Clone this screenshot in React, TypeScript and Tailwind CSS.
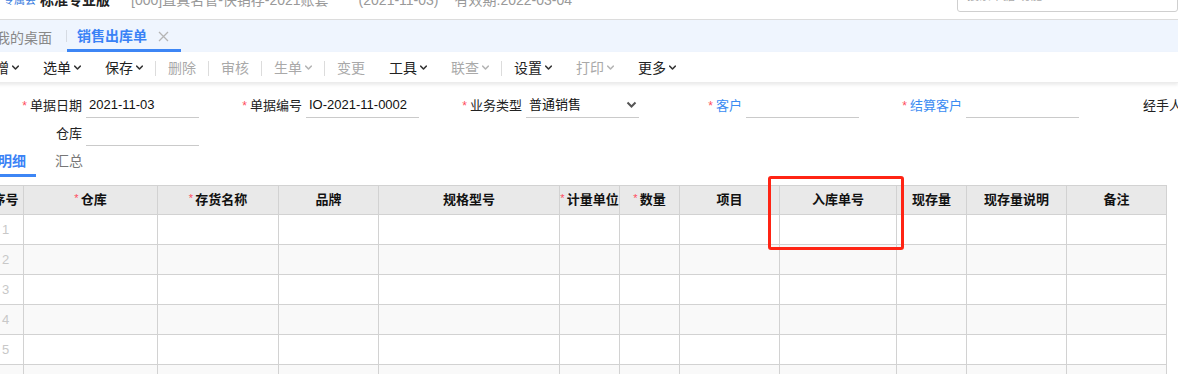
import React from 'react';

const FONT = "font-['Liberation_Sans','Noto_Sans_CJK_SC',sans-serif]";

const Chevron = ({ muted = false }: { muted?: boolean }) => (
  <svg width="7" height="6" viewBox="0 0 7 6" className="ml-[3px]">
    <path
      d="M0.8 1.2l2.7 2.8 2.7-2.8"
      fill="none"
      stroke={muted ? '#b4b4b4' : '#333'}
      strokeWidth="1.6"
      strokeLinecap="round"
      strokeLinejoin="round"
    />
  </svg>
);

type ToolItem = { label: string; menu?: boolean; muted?: boolean; sep?: boolean };

const tools: ToolItem[] = [
  { label: '新增', menu: true },
  { label: '选单', menu: true },
  { label: '保存', menu: true },
  { label: '删除', muted: true, sep: true },
  { label: '审核', muted: true, sep: true },
  { label: '生单', menu: true, muted: true, sep: true },
  { label: '变更', muted: true, sep: true },
  { label: '工具', menu: true },
  { label: '联查', menu: true, muted: true },
  { label: '设置', menu: true, sep: true },
  { label: '打印', menu: true, muted: true },
  { label: '更多', menu: true },
];

const columns = [
  { label: '序号', cls: 'w-[36px]' },
  { label: '仓库', cls: 'w-[134px]', req: true },
  { label: '存货名称', cls: 'w-[121px]', req: true },
  { label: '品牌', cls: 'w-[100px]' },
  { label: '规格型号', cls: 'w-[181px]' },
  { label: '计量单位', cls: 'w-[60px]', req: true },
  { label: '数量', cls: 'w-[60px]', req: true },
  { label: '项目', cls: 'w-[100px]' },
  { label: '入库单号', cls: 'w-[117px]' },
  { label: '现存量', cls: 'w-[70px]' },
  { label: '现存量说明', cls: 'w-[100px]' },
  { label: '备注', cls: 'w-[100px]' },
];

const Star = () => <span className="text-[#ff4d5e] text-[12px] mr-[3px] leading-none">*</span>;

const Field = ({
  label,
  value,
  req,
  link,
  select,
}: {
  label: string;
  value?: string;
  req?: boolean;
  link?: boolean;
  select?: boolean;
}) => (
  <div className="w-[220px] shrink-0 flex items-stretch h-[24px]">
    <div className="w-[82px] flex items-center justify-end whitespace-nowrap">
      {req && <Star />}
      <span className={link ? 'text-[#3b8cf2]' : 'text-[#222]'}>{label}</span>
    </div>
    <div className="ml-[4px] w-[113px] border-b border-[#cacaca] flex items-center justify-between pb-[2px] pl-[3px] pr-[2px] text-[#111]">
      <span>{value}</span>
      {select && (
        <svg width="11" height="8" viewBox="0 0 11 8">
          <path d="M1.5 1.5l4 4 4-4" fill="none" stroke="#555" strokeWidth="2" />
        </svg>
      )}
    </div>
  </div>
);

export default function App() {
  return (
    <div className={`w-[1178px] h-[374px] overflow-hidden bg-white relative text-[13px] ${FONT}`}>
      {/* cut-off top header strip */}
      <div className="h-[20px] border-b border-[#dcdcdc] overflow-hidden flex items-start">
        <div className="flex items-center -mt-[10px] whitespace-nowrap">
          <span className="ml-[3px] text-[11px] text-[#3b7de0]">专属会</span>
          <span className="ml-[4px] text-[14px] font-bold text-[#222]">标准专业版</span>
          <span className="ml-[21px] text-[14px] text-[#999]">[000]直真名管-快销存-2021账套</span>
          <span className="ml-[30px] text-[14px] text-[#999]">(2021-11-03)</span>
          <span className="ml-[16px] text-[14px] text-[#999]">有效期:2022-03-04</span>
        </div>
        <div className="ml-auto -mt-[21px] h-[33px] w-[221px] border border-[#cfcfcf] rounded-[3px] flex items-center pl-[9px] text-[12px] text-[#aaa]">
          搜索单据/功能
        </div>
      </div>

      {/* tab bar */}
      <div className="h-[32px] bg-[#eff5fe] flex items-stretch text-[14px]">
        <div className="-ml-[4px] pr-[14px] flex items-center pt-[4px] text-[#888]">我的桌面</div>
        <div className="w-px bg-[#d6dbe3] my-[10px]" />
        <div className="flex items-center pl-[10px] pr-[12px] pt-[4px] border-b-[3px] border-[#3d86f5]">
          <span className="font-bold text-[#3a82f6]">销售出库单</span>
          <svg width="11" height="11" viewBox="0 0 11 11" className="ml-[11px]">
            <path d="M1 1l9 9M10 1l-9 9" stroke="#b5b5b5" strokeWidth="1.3" />
          </svg>
        </div>
      </div>

      {/* toolbar */}
      <div className="h-[31px] flex items-center pt-[2px] -ml-[31px] shadow-[0_2px_3px_rgba(0,0,0,0.08)] border-b border-[#ececec] text-[14px]">
        {tools.map((t, i) => (
          <React.Fragment key={i}>
            {t.sep && <div className="w-px h-[15px] bg-[#dcdcdc]" />}
            <div className={`flex items-center px-[12px] ${t.muted ? 'text-[#a9a9a9]' : 'text-[#222]'}`}>
              <span>{t.label}</span>
              {t.menu && <Chevron muted={t.muted} />}
            </div>
          </React.Fragment>
        ))}
      </div>

      {/* form */}
      <div className="pt-[11px]">
        <div className="flex">
          <Field label="单据日期" value="2021-11-03" req />
          <Field label="单据编号" value="IO-2021-11-0002" req />
          <Field label="业务类型" value="普通销售" req select />
          <Field label="客户" req link />
          <Field label="结算客户" req link />
          <Field label="经手人" />
        </div>
        <div className="flex mt-[4px]">
          <Field label="仓库" />
        </div>
      </div>

      {/* detail tabs */}
      <div className="flex mt-[2px] h-[29px] -ml-[12px] text-[14px]">
        <div className="w-[48px] flex items-center justify-center border-b-[3px] border-[#3d86f5] font-bold text-[#3a82f6]">
          明细
        </div>
        <div className="w-[48px] ml-[9px] flex items-center justify-center text-[#777] pb-[3px]">汇总</div>
      </div>

      {/* grid */}
      <div className="mt-[8px] -ml-[12px] w-[1179px]">
        <div className="flex bg-[#e9e9e9] border-t border-b border-[#d2d2d2] h-[30px]">
          {columns.map((c, i) => (
            <div
              key={i}
              className={`${c.cls} shrink-0 border-r border-[#d2d2d2] flex items-center justify-center whitespace-nowrap overflow-hidden font-bold text-[#111]`}
            >
              {c.req && <span className="text-[#ff4d5e] text-[11px] font-normal mr-[2px] -mt-[3px]">*</span>}
              {c.label}
            </div>
          ))}
        </div>
        {[1, 2, 3, 4, 5, 6].map((n) => (
          <div key={n} className={`flex h-[30px] border-b border-[#d2d2d2] ${n % 2 === 0 ? 'bg-[#f9f9f9]' : 'bg-white'}`}>
            {columns.map((c, i) => (
              <div
                key={i}
                className={`${c.cls} shrink-0 border-r border-[#d2d2d2] flex items-center justify-center text-[#c8c8c8]`}
              >
                {i === 0 ? n : null}
              </div>
            ))}
          </div>
        ))}
      </div>

      {/* red highlight annotation */}
      <div className="absolute left-[768px] top-[176px] w-[136px] h-[74px] border-[3px] border-[#ff2414] rounded-[3px]" />
    </div>
  );
}
